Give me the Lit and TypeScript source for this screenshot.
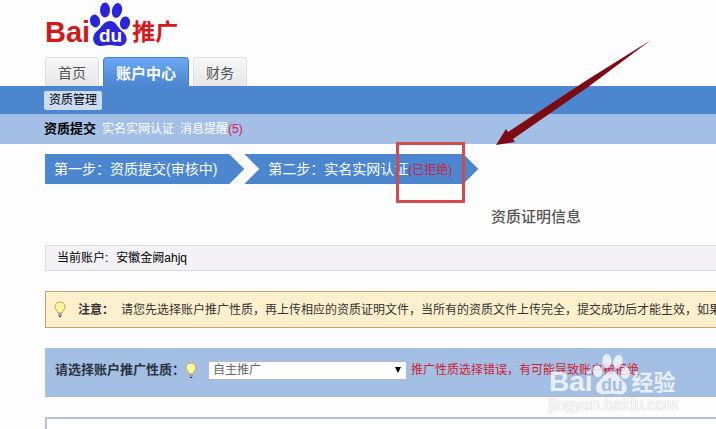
import { LitElement, html, css, svg } from "lit";
import { customElement, property } from "lit/decorators.js";

const paw = svg`
  <ellipse cx="5" cy="19" rx="5" ry="6.5" transform="rotate(-14 5 19)"></ellipse>
  <ellipse cx="15" cy="8" rx="5" ry="7.5"></ellipse>
  <ellipse cx="27" cy="8.5" rx="5" ry="7.5" transform="rotate(14 27 8.5)"></ellipse>
  <ellipse cx="35" cy="21" rx="5" ry="6.5" transform="rotate(10 35 21)"></ellipse>
  <path d="M20 19C26 19 27 25 32 29C39 34 38 44 29 44C25 44 23 43 20 43C16 43 14 44 11 44C2 44 1 34 7 29C12 25 14 19 20 19Z"></path>`;

@customElement("brand-logo")
export class BrandLogo extends LitElement {
  @property() suffix = "";
  static styles = css`
    :host { display: flex; align-items: flex-end; font-family: "Liberation Sans", "Noto Sans CJK SC", sans-serif; font-weight: 700; }
    .latin { font-size: var(--latin-size, 29px); line-height: 28px; color: var(--ink, #d01a1c); }
    .suffix { font-size: var(--suffix-size, 23px); line-height: 27px; color: var(--ink, #d01a1c); margin-left: 2px; }
    .paw { width: var(--paw-size, 40px); height: 44px; fill: var(--paw, #2a25d8); flex: none; }
    .du { font-size: 19px; fill: var(--du, #fff); }
  `;
  render() {
    return html`<span class="latin">Bai</span>
      <svg class="paw" viewBox="0 0 40 44">${paw}<text class="du" x="9" y="40">du</text></svg>
      <span class="suffix">${this.suffix}</span>`;
  }
}

@customElement("tip-bulb")
export class TipBulb extends LitElement {
  static styles = css`
    :host { display: block; width: 12px; height: 17px; flex: none; }
    svg { display: block; }
  `;
  render() {
    return html`<svg width="12" height="17" viewBox="0 0 12 17">
      <path d="M6 1C3 1 1 3 1 6C1 8 3 9 4 12H8C9 9 11 8 11 6C11 3 9 1 6 1Z" fill="#fff6a0" stroke="#c9a63c"></path>
      <path d="M3 6C3 4 4 3 6 3" fill="none" stroke="#fff"></path>
      <path d="M4 12H8V15H4Z" fill="#a4a4b4"></path>
      <path d="M5 15H7V16H5Z" fill="#333"></path>
    </svg>`;
  }
}

@customElement("app-root")
export class AppRoot extends LitElement {
  static styles = css`
    :host { display: block; position: relative; overflow: hidden; background: #fdfdfd; color: #111; font: 12px/18px "Liberation Sans", "Noto Sans CJK SC", sans-serif; white-space: nowrap; }
    a { color: inherit; text-decoration: none; }
    .head { padding: 2px 0 0 45px; }
    .tabs { display: flex; gap: 4px; padding: 11px 0 0 45px; }
    .tab { box-sizing: border-box; height: 29px; padding: 0 12px; border: 1px solid #dcdcdc; border-bottom: 0; border-radius: 4px 4px 0 0; background: linear-gradient(#f8f8f8, #e6e5e8); font-size: 14px; line-height: 31px; color: #555; }
    .tab.on { border-color: #3f7fd0; background: linear-gradient(#6aa9f2, #4b86cf); color: #fff; font-size: 15px; font-weight: 700; }
    .bar { display: flex; align-items: center; height: 28px; padding-left: 44px; background: #4b86cf; }
    .pill { padding: 0 5px; border-radius: 2px; background: #cbdcf4; line-height: 19px; color: #000; }
    .sub { display: flex; align-items: center; gap: 6px; height: 30px; padding-left: 44px; background: #a4bfe5; color: #fff; }
    .sub .on { font-size: 13px; font-weight: 700; color: #000; }
    .count { color: #d8224e; }
    .steps { display: flex; margin: 10px 0 0 45px; padding: 0; list-style: none; }
    .step { box-sizing: border-box; height: 30px; background: #4b86cf; color: #fff; font-size: 14px; line-height: 30px; padding: 0 27px 0 9px; clip-path: polygon(0 0, calc(100% - 15px) 0, 100% 50%, calc(100% - 15px) 100%, 0 100%); }
    .step.next { padding: 0 26px 0 24px; clip-path: polygon(0 0, calc(100% - 15px) 0, 100% 50%, calc(100% - 15px) 100%, 0 100%, 15px 50%); }
    .state { font-size: 12px; color: #d01c40; }
    .title { margin: 24px 0 0; padding-left: 491px; font-size: 15px; line-height: 18px; font-weight: 500; color: #555; }
    .main { display: flex; flex-direction: column; gap: 20px; padding: 19px 0 0 45px; }
    .account { display: flex; gap: 8px; padding: 3px 0 2px 11px; border: 1px solid #dcdbe2; border-right: 0; background: #f4f2f7; line-height: 19px; color: #000; }
    .notice { display: flex; align-items: center; height: 35px; padding-left: 8px; border: 1px solid #c8a273; border-right: 0; background: #fff0cd; color: #333; }
    .notice b { margin: 0 7px 0 12px; }
    .pick { display: flex; align-items: center; box-sizing: border-box; height: 49px; padding: 0 0 4px 10px; border-bottom: 1px solid #b0b9c8; background: #a4bfe4; }
    .pick label { font-size: 13px; font-weight: 700; color: #2b3442; }
    .drop { position: relative; margin: 0 4px 0 11px; }
    select { display: block; appearance: none; box-sizing: border-box; width: 199px; height: 19px; padding: 0 20px 0 4px; border: 1px solid #b4b9c2; border-radius: 0; background: #fff; font: 12px/17px "Liberation Sans", "Noto Sans CJK SC", sans-serif; color: #666; }
    .caret { position: absolute; right: 6px; top: 6px; pointer-events: none; }
    .error { color: #d01c30; }
    .panel { height: 10px; border: 2px solid #b8c2d0; border-width: 2px 0 0 2px; background: #fff; }
    .frame { position: absolute; left: 396px; top: 142px; box-sizing: border-box; width: 69px; height: 61px; border: 3px solid #d04c50; }
    .arrow { position: absolute; left: 496px; top: 39px; }
    .mark { position: absolute; left: 549px; top: 352px; opacity: 0.75; --ink: #fff; --paw: #fff; --du: #a4bfe5; --latin-size: 28px; --suffix-size: 22px; --paw-size: 37px; }
    .mark p { margin: 0; font-size: 16px; line-height: 18px; color: #fff; text-shadow: 0 0 1px #aaa, 0 0 1px #ccc; }
  `;

  render() {
    return html`
      <header>
        <div class="head"><brand-logo suffix="推广"></brand-logo></div>
        <nav class="tabs">
          <a class="tab" href="#home">首页</a>
          <a class="tab on" href="#account">账户中心</a>
          <a class="tab" href="#finance">财务</a>
        </nav>
        <nav class="bar"><a class="pill" href="#manage">资质管理</a></nav>
        <nav class="sub">
          <a class="on" href="#submit">资质提交</a>
          <a href="#verify">实名实网认证</a>
          <a href="#alerts">消息提醒<span class="count">(5)</span></a>
        </nav>
      </header>
      <ol class="steps">
        <li class="step">第一步：资质提交(审核中)</li>
        <li class="step next">第二步：实名实网认证<span class="state">(已拒绝)</span></li>
      </ol>
      <h1 class="title">资质证明信息</h1>
      <main class="main">
        <div class="account"><span>当前账户:</span><span>安徽金阙ahjq</span></div>
        <div class="notice"><tip-bulb></tip-bulb><b>注意：</b><span>请您先选择账户推广性质，再上传相应的资质证明文件，当所有的资质文件上传完全，提交成功后才能生效，如果</span></div>
        <div class="pick">
          <label for="kind">请选择账户推广性质：</label>
          <tip-bulb></tip-bulb>
          <span class="drop">
            <select id="kind"><option>自主推广</option></select>
            <svg class="caret" width="6" height="6" viewBox="0 0 6 6"><path d="M0 0H6L3 6Z" fill="#000"></path></svg>
          </span>
          <span class="error">推广性质选择错误，有可能导致账户被拒绝</span>
        </div>
        <section class="panel"></section>
      </main>
      <div class="frame"></div>
      <svg class="arrow" width="156" height="108" viewBox="0 0 156 108">
        <path d="M155 1L91 41L12 93L10 90L0 106L19 103L17 100L92 48Z" fill="#7d0a12"></path>
      </svg>
      <div class="mark"><brand-logo suffix="经验"></brand-logo><p>jingyan.baidu.com</p></div>
    `;
  }
}
